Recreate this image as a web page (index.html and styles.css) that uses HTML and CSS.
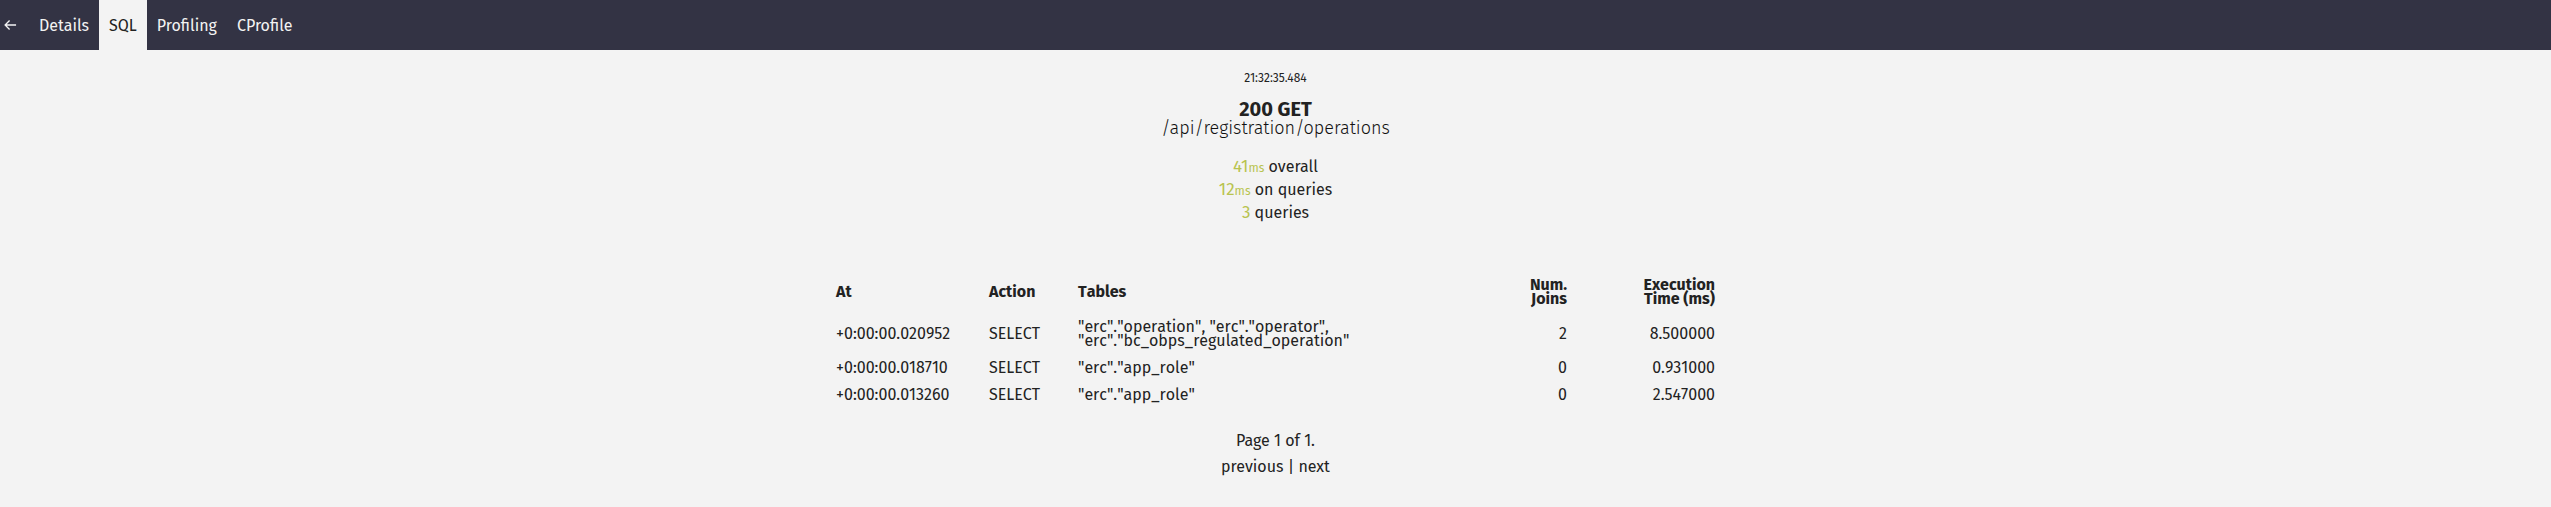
FILE: index.html
```html
<!DOCTYPE html>
<html>
<head>
<meta charset="utf-8">
<link rel="stylesheet" href="styles.css">
</head>
<body>
<nav class="menu">
  <a class="menu-item back" href="#"><svg width="14" height="12" viewBox="0 0 14 12"><path d="M13 6H1.5M6 1.2L1.2 6L6 10.8" fill="none" stroke="#f3f3f3" stroke-width="1.4"/></svg></a>
  <a class="menu-item" href="#">Details</a>
  <a class="menu-item active" href="#">SQL</a>
  <a class="menu-item" href="#">Profiling</a>
  <a class="menu-item" href="#">CProfile</a>
</nav>
<main class="content">
  <div class="heading">
    <div class="timestamp">21:32:35.484</div>
    <div class="status">200 GET</div>
    <div class="path">/api/registration/operations</div>
  </div>
  <div class="stats">
    <div><span class="num">41<span class="unit">ms</span></span> overall</div>
    <div><span class="num">12<span class="unit">ms</span></span> on queries</div>
    <div><span class="num">3</span> queries</div>
  </div>
  <table class="sql-table">
    <colgroup>
      <col class="c-at"><col class="c-action"><col class="c-tables"><col class="c-joins"><col class="c-time">
    </colgroup>
    <thead>
      <tr>
        <th class="left">At</th>
        <th class="left">Action</th>
        <th class="left">Tables</th>
        <th class="right">Num.<br>Joins</th>
        <th class="right">Execution<br>Time (ms)</th>
      </tr>
    </thead>
    <tbody>
      <tr>
        <td>+0:00:00.020952</td>
        <td>SELECT</td>
        <td>"erc"."operation", "erc"."operator", "erc"."bc_obps_regulated_operation"</td>
        <td class="right">2</td>
        <td class="right">8.500000</td>
      </tr>
      <tr>
        <td>+0:00:00.018710</td>
        <td>SELECT</td>
        <td>"erc"."app_role"</td>
        <td class="right">0</td>
        <td class="right">0.931000</td>
      </tr>
      <tr>
        <td>+0:00:00.013260</td>
        <td>SELECT</td>
        <td>"erc"."app_role"</td>
        <td class="right">0</td>
        <td class="right">2.547000</td>
      </tr>
    </tbody>
  </table>
  <div class="pagination">
    <div>Page 1 of 1.</div>
    <div>previous | next</div>
  </div>
</main>
</body>
</html>
```
FILE: styles.css
```css
html, body {
  margin: 0;
  padding: 0;
  background: #f3f3f3;
}
body {
  font-family: "Fira Sans", "Open Sans", sans-serif;
  color: #222;
}
.menu {
  display: flex;
  align-items: stretch;
  height: 50px;
  background: #333344;
}
.menu-item {
  display: flex;
  align-items: center;
  padding: 0 10px;
  color: #f3f3f3;
  text-decoration: none;
  font-size: 16px;
}
.menu-item.back {
  padding: 0 12px 0 4px;
  width: 13px;
}
.menu-item.active {
  background: #f3f3f3;
  color: #222;
}
.content {
  display: flex;
  flex-direction: column;
  align-items: center;
}
.heading {
  text-align: center;
  margin-top: 20px;
}
.timestamp {
  font-size: 12px;
  line-height: 16px;
  margin-bottom: 14px;
}
.status {
  font-size: 20px;
  font-weight: bold;
  line-height: 19px;
}
.path {
  font-size: 18px;
  font-weight: 300;
  line-height: 19px;
  color: #111;
}
.stats {
  margin-top: 18px;
  text-align: center;
  font-size: 16px;
  line-height: 22px;
}
.num {
  color: #b8c34f;
  font-size: 17px;
}
.unit {
  font-size: 12px;
}
.sql-table {
  margin-top: 46px;
  border-collapse: collapse;
  table-layout: fixed;
  width: 899px;
  font-size: 16px;
  font-kerning: none;
}
.c-at { width: 153px; }
.c-action { width: 89px; }
.c-tables { width: 334px; }
.c-joins { width: 175px; }
.c-time { width: 148px; }
.sql-table th {
  font-weight: bold;
  line-height: 14px;
  padding: 8px 10px 8px;
  vertical-align: middle;
}
.sql-table td {
  line-height: 14px;
  padding: 6px 10px 7px;
  vertical-align: middle;
}
.left { text-align: left; }
.right { text-align: right; }
.pagination {
  margin-top: 19px;
  text-align: center;
  font-size: 16px;
  line-height: 26px;
}
```
